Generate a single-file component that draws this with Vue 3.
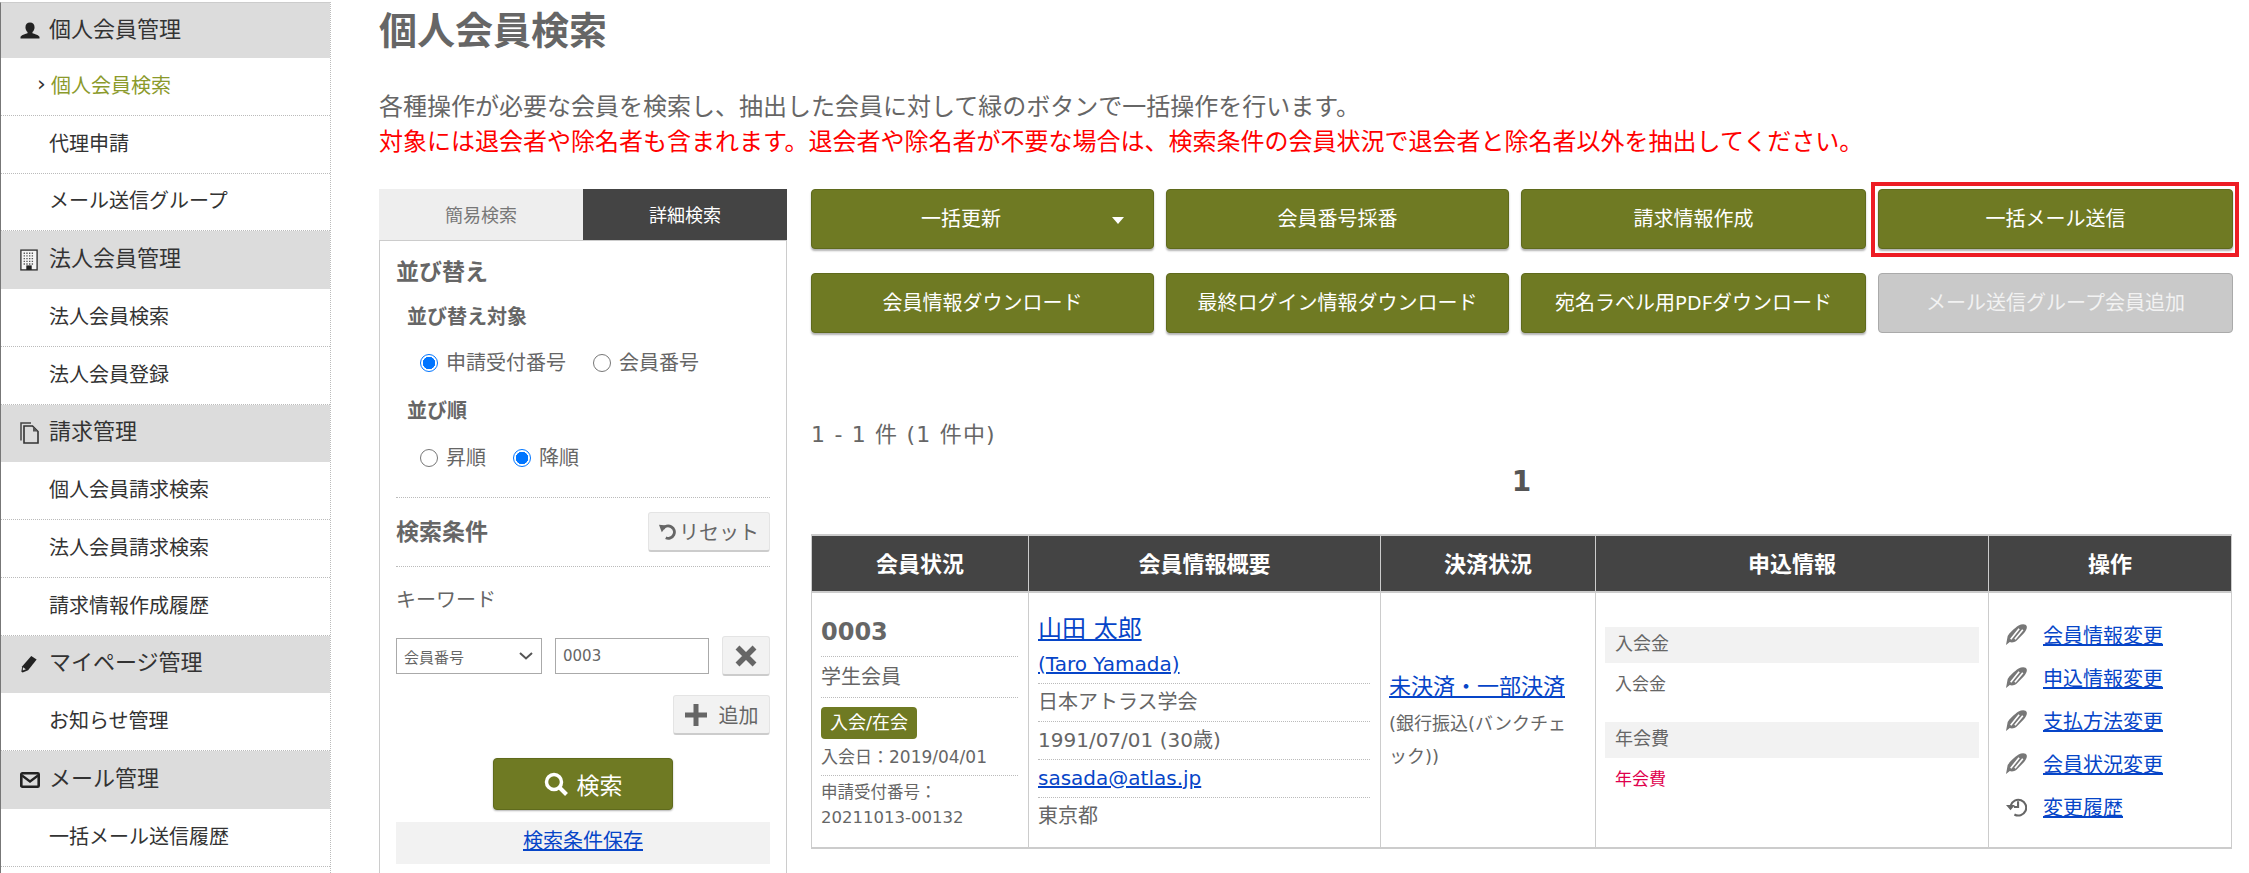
<script setup>
const sidebar = [
  { title: '個人会員管理', icon: 'user', items: [{ t: '個人会員検索', active: true }, { t: '代理申請' }, { t: 'メール送信グループ' }] },
  { title: '法人会員管理', icon: 'building', items: [{ t: '法人会員検索' }, { t: '法人会員登録' }] },
  { title: '請求管理', icon: 'file', items: [{ t: '個人会員請求検索' }, { t: '法人会員請求検索' }, { t: '請求情報作成履歴' }] },
  { title: 'マイページ管理', icon: 'pencil', items: [{ t: 'お知らせ管理' }] },
  { title: 'メール管理', icon: 'mail', items: [{ t: '一括メール送信履歴' }] }
]
const actions = [
  { t: '一括更新', caret: true }, { t: '会員番号採番' }, { t: '請求情報作成' }, { t: '一括メール送信', marked: true },
  { t: '会員情報ダウンロード' }, { t: '最終ログイン情報ダウンロード' }, { t: '宛名ラベル用PDFダウンロード' }, { t: 'メール送信グループ会員追加', off: true }
]
const ops = ['会員情報変更', '申込情報変更', '支払方法変更', '会員状況変更']
</script>

<template>
  <div class="page">
    <aside class="side">
      <template v-for="g in sidebar" :key="g.title">
        <div class="side-head">
          <span class="side-ico">
            <svg v-if="g.icon === 'user'" viewBox="0 0 20 20" width="20" height="19"><path fill="#222" d="M10 1.500c3 0 4.800 2 4.800 5 0 2.200-1 4-2.200 5v1.300c2 .8 5.500 1.200 7.400 3.700v2H0v-2c1.900-2.500 5.400-2.900 7.400-3.700v-1.300C6.200 10.500 5.200 8.700 5.200 6.500c0-3 1.800-5 4.800-5z"/></svg>
            <svg v-else-if="g.icon === 'building'" viewBox="0 0 20 24" width="18" height="22"><rect x="1" y="1" width="18" height="22" fill="#f4f4f4" stroke="#333" stroke-width="1.500"/><path stroke="#555" stroke-width="1.500" stroke-dasharray="1.500 1.500" d="M4 4.500h12M4 7.500h12M4 10.500h12M4 13.500h12M4 16.500h12"/><rect x="7" y="18" width="6" height="5" fill="#222"/></svg>
            <svg v-else-if="g.icon === 'file'" viewBox="0 0 20 22" width="20" height="22"><path fill="none" stroke="#444" stroke-width="1.500" d="M1 18.500V1h10"/><path fill="none" stroke="#333" stroke-width="1.600" d="M4 21V4h8.500L18 9.500V21z"/><path fill="#555" d="M13 4.500v5h5z"/></svg>
            <svg v-else-if="g.icon === 'pencil'" viewBox="0 0 20 20" width="18" height="20"><path fill="#222" d="M12.500 1l6 4L9 17l-6 2.500L1.500 18.500l1-6z"/><path fill="#ddd" d="M3.300 13.500l3.200 2.300-3.500 1.500z"/></svg>
            <svg v-else viewBox="0 0 20 16" width="20" height="16"><rect x="1.300" y="1.300" width="17.400" height="13.400" rx="1" fill="none" stroke="#222" stroke-width="2.600"/><path fill="none" stroke="#222" stroke-width="2.200" d="M2 3.500l8 6 8-6"/></svg>
          </span>
          <span>{{ g.title }}</span>
        </div>
        <div v-for="i in g.items" :key="i.t" class="side-item" :class="{ active: i.active }">
          <span v-if="i.active" class="chev">›</span>{{ i.t }}
        </div>
      </template>
    </aside>

    <main class="main">
      <h1 class="title">個人会員検索</h1>
      <p class="desc">各種操作が必要な会員を検索し、抽出した会員に対して緑のボタンで一括操作を行います。<br><span class="red">対象には退会者や除名者も含まれます。退会者や除名者が不要な場合は、検索条件の会員状況で退会者と除名者以外を抽出してください。</span></p>

      <div class="cols">
        <section class="search">
          <div class="tabs"><div class="tab">簡易検索</div><div class="tab on">詳細検索</div></div>
          <div class="panel">
            <h3 class="h3 first">並び替え</h3>
            <h4 class="h4">並び替え対象</h4>
            <div class="radios">
              <label class="radio"><i class="dot on"></i>申請受付番号</label>
              <label class="radio"><i class="dot"></i>会員番号</label>
            </div>
            <h4 class="h4 second">並び順</h4>
            <div class="radios last">
              <label class="radio"><i class="dot"></i>昇順</label>
              <label class="radio"><i class="dot on"></i>降順</label>
            </div>
            <div class="cond-head">
              <h3 class="h3">検索条件</h3>
              <button class="soft reset">
                <svg viewBox="0 0 16 16" width="18" height="18"><path fill="none" stroke="#666" stroke-width="2.600" d="M3.500 6A5.500 5.500 0 1 1 6 14"/><path fill="#666" d="M0 2.500l7 .5-4.500 6z"/></svg>
                リセット
              </button>
            </div>
            <div class="kw-label">キーワード</div>
            <div class="kw-row">
              <div class="select">会員番号
                <svg viewBox="0 0 14 8" width="14" height="8"><path fill="none" stroke="#555" stroke-width="2" d="M1 1l6 5.500L13 1"/></svg>
              </div>
              <div class="input">0003</div>
              <button class="soft x">
                <svg viewBox="0 0 22 22" width="22" height="22"><path fill="none" stroke="#666" stroke-width="5.500" d="M2.500 2.500l17 17M19.500 2.500l-17 17"/></svg>
              </button>
            </div>
            <div class="add-row">
              <button class="soft add">
                <svg viewBox="0 0 22 22" width="22" height="22"><path fill="#666" d="M8.500 0h5v8.500H22v5h-8.500V22h-5v-8.500H0v-5h8.500z"/></svg>
                追加
              </button>
            </div>
            <div class="go-row">
              <button class="go">
                <svg viewBox="0 0 24 24" width="24" height="24"><circle cx="10" cy="10" r="7.500" fill="none" stroke="#fff" stroke-width="3.500"/><path stroke="#fff" stroke-width="4" d="M15.500 15.500l7 7"/></svg>
                検索
              </button>
            </div>
            <div class="save"><a href="#" class="lnk">検索条件保存</a></div>
          </div>
        </section>

        <section class="results">
          <div class="actions">
            <button v-for="a in actions" :key="a.t" class="act" :class="{ off: a.off, marked: a.marked, drop: a.caret }">
              <span>{{ a.t }}</span>
              <i v-if="a.caret" class="caret"></i>
            </button>
          </div>
          <div class="count">1 - 1 件 (1 件中)</div>
          <div class="pager">1</div>

          <table class="tbl">
            <colgroup><col class="w1"><col class="w2"><col class="w3"><col class="w4"><col class="w5"></colgroup>
            <thead>
              <tr><th>会員状況</th><th>会員情報概要</th><th>決済状況</th><th>申込情報</th><th>操作</th></tr>
            </thead>
            <tbody>
              <tr>
                <td class="c1">
                  <div class="b-num">0003</div>
                  <div class="b-type">学生会員</div>
                  <div class="b-state">
                    <span class="badge">入会/在会</span>
                    <div class="small">入会日：2019/04/01</div>
                  </div>
                  <div class="small rcpt">申請受付番号：<br>20211013-00132</div>
                </td>
                <td class="c2">
                  <div class="who"><a href="#" class="lnk name">山田 太郎</a><br><a href="#" class="lnk">(Taro Yamada)</a></div>
                  <div class="line">日本アトラス学会</div>
                  <div class="line">1991/07/01 (30歳)</div>
                  <div class="line"><a href="#" class="lnk">sasada@atlas.jp</a></div>
                  <div class="line nb">東京都</div>
                </td>
                <td class="c3">
                  <a href="#" class="lnk big">未決済・一部決済</a>
                  <div class="small pay">(銀行振込(バンクチェ<br>ック))</div>
                </td>
                <td class="c4">
                  <div class="fee-h">入会金</div>
                  <div class="fee">入会金</div>
                  <div class="fee-h">年会費</div>
                  <div class="fee due">年会費</div>
                </td>
                <td class="c5">
                  <div v-for="o in ops" :key="o" class="op">
                    <svg viewBox="0 0 20 20" width="21" height="21"><path fill="#777" d="M0 20l1.600-8.500C3 9 8 4 12 1.500c3-1.800 7.200-1.800 7.800.8.400 2-1 4.500-3 6.700L10 16c-2 1.600-4.600 2-6.400 1.200z"/><path fill="none" stroke="#fff" stroke-width="1.600" d="M4.500 14.500L12.500 4.500M8.500 14.500L16 5.500"/></svg>
                    <a href="#" class="lnk">{{ o }}</a>
                  </div>
                  <div class="op">
                    <svg viewBox="0 0 20 20" width="21" height="21"><path fill="none" stroke="#666" stroke-width="2" d="M4.500 9A7.500 7.500 0 1 1 8 17.600"/><path fill="#666" d="M0 8.500h8.500L4.300 13.500zM10.500 5h2v6.500H7.500v-2h3z"/></svg>
                    <a href="#" class="lnk">変更履歴</a>
                  </div>
                </td>
              </tr>
            </tbody>
          </table>
        </section>
      </div>
    </main>
  </div>
</template>

<style>
html, body { margin: 0; background: #fff; overflow: hidden; }
</style>

<style scoped>
.page {
  display: flex;
  width: 2249px;
  height: 873px;
  overflow: hidden;
  font-family: "DejaVu Sans", "Noto Sans CJK JP", sans-serif;
  color: #666;
  background: #fff;
}
.side {
  width: 329px;
  flex: none;
  margin-top: 2px;
  border-left: 1px solid #777;
  border-right: 1px dotted #bbb;
  border-top: 1px solid #ccc;
  color: #333;
  font-size: 20px;
}
.side-head {
  height: 57.75px;
  background: #dcdcdc;
  display: flex;
  align-items: center;
  font-size: 22px;
  padding-left: 19px;
  padding-bottom: 8px;
  box-sizing: border-box;
}
.side-head:first-child { height: 55px; }
.side-ico { width: 29px; display: flex; align-items: center; flex: none; margin-top: 8px; }
.side-item {
  position: relative;
  height: 57.75px;
  box-sizing: border-box;
  padding-left: 48px;
  padding-bottom: 4px;
  display: flex;
  align-items: center;
  border-bottom: 1px dotted #bbb;
}
.side-item.active { color: #8b9a2b; padding-left: 50px; }
.chev { position: absolute; left: 36px; color: #333; font-size: 22px; line-height: 1; }

.main { flex: 1; padding-left: 48px; min-width: 0; }
.title { margin: 7px 0 0; font-size: 38px; line-height: 48px; font-weight: 700; color: #666; }
.desc { margin: 35px 0 0; font-size: 24px; line-height: 34.5px; color: #666; height: 69px; }
.red { color: #f00; }

.cols { display: flex; margin-top: 30px; }
.search { width: 408px; flex: none; }
.tabs { display: flex; height: 51px; }
.tab { flex: 1; display: flex; align-items: center; justify-content: center; background: #eee; font-size: 18px; color: #777; padding-bottom: 2px; box-sizing: border-box; }
.tab.on { background: #444; color: #fff; }
.panel { border: 1px solid #ccc; padding: 14px 16px 40px; height: 640px; box-sizing: border-box; }
.h3 { margin: 0; font-size: 23px; line-height: 34px; font-weight: 700; color: #666; }
.h4 { margin: 13px 0 0 11px; font-size: 20px; line-height: 30px; font-weight: 700; color: #666; }
.h4.second { margin-top: 18px; }
.radios { display: flex; gap: 27px; margin: 16px 0 0 24px; height: 30px; }
.radios.last { padding-bottom: 25px; margin-top: 17px; height: 29px; }
.radio { display: flex; align-items: center; font-size: 20px; line-height: 30px; color: #666; }
.dot { width: 18px; height: 18px; border-radius: 50%; border: 1.5px solid #777; box-sizing: border-box; margin-right: 8px; flex: none; background: #fff; }
.dot.on { border: 1.5px solid #0075ff; background: radial-gradient(circle, #0075ff 0 6px, #fff 6.500px); }
.cond-head { border-top: 1px dotted #bbb; border-bottom: 1px dotted #bbb; display: flex; justify-content: space-between; align-items: center; height: 70px; box-sizing: border-box; padding-bottom: 1px; }
.soft { background: #f2f2f2; border: 1px solid #e4e4e4; border-bottom: 2px solid #ccc; border-radius: 3px; color: #666; font: inherit; font-size: 20px; display: flex; align-items: center; justify-content: center; padding: 0; box-sizing: border-box; }
.reset { width: 122px; height: 40px; gap: 2px; }
.kw-label { margin-top: 18px; font-size: 20px; line-height: 30px; }
.kw-row { display: flex; align-items: center; margin-top: 21px; height: 40px; }
.select, .input { height: 36px; box-sizing: border-box; border: 1px solid #aaa; font-size: 15px; color: #666; display: flex; align-items: center; padding-left: 7px; background: #fff; }
.select { width: 146px; justify-content: space-between; padding-right: 8px; }
.input { width: 154px; margin-left: 13px; }
.x { width: 48px; height: 40px; margin-left: 13px; }
.add-row { display: flex; justify-content: flex-end; margin-top: 19px; }
.add { width: 97px; height: 40px; gap: 12px; }
.go-row { display: flex; justify-content: center; margin-top: 23px; }
.go { width: 180px; height: 52px; background: #6f7a23; border: 1px solid #5f6a1c; border-radius: 4px; box-shadow: 0 1px 2px rgba(0, 0, 0, .3); color: #fff; font: inherit; font-size: 23px; display: flex; align-items: center; justify-content: center; gap: 9px; padding: 0; }
.save { margin-top: 12px; height: 42px; background: #f2f2f2; text-align: center; font-size: 20px; line-height: 38px; }
.lnk { color: #0645c8; text-decoration: underline; }

.results { margin-left: 24px; width: 1421px; }
.actions { display: grid; grid-template-columns: 343px 343px 345px 355px; column-gap: 12px; row-gap: 24px; }
.act { position: relative; height: 60px; background: #6f7a23; border: 1px solid #5f6a1c; border-radius: 4px; box-shadow: 0 2px 2px rgba(0, 0, 0, .3); color: #fff; font-family: "Noto Sans", "Noto Sans CJK JP", sans-serif; font-size: 20px; padding: 0 0 4px; display: flex; align-items: center; justify-content: center; }
.act.drop { padding-right: 43px; }
.act.off { background: #c9c9c9; border-color: #aaa; box-shadow: none; color: #f2f2f2; }
.act.marked::after { content: ""; position: absolute; inset: -8px -7px -9px -8px; border: 4px solid #ed1c24; pointer-events: none; }
.caret { position: absolute; left: 300px; top: 27px; width: 0; height: 0; border-left: 6px solid transparent; border-right: 6px solid transparent; border-top: 7px solid #fff; }
.count { margin-top: 84px; font-size: 22px; line-height: 36px; color: #666; letter-spacing: 1.2px; }
.pager { margin-top: 9px; text-align: center; font-size: 28px; line-height: 40px; font-weight: 700; color: #555; width: 1421px; }

.tbl { margin-top: 32px; width: 1420px; table-layout: fixed; border-collapse: collapse; border-top: 2px solid #ccc; border-bottom: 2px solid #ccc; border-right: 1px solid #ccc; border-left: 1px solid #ccc; }
.w1 { width: 217px; }
.w2 { width: 352px; }
.w3 { width: 215px; }
.w4 { width: 393px; }
.w5 { width: 243px; }
.tbl th { height: 57px; padding: 0 0 3px; background: #444; color: #fff; font-size: 22px; font-weight: 700; border-left: 1px solid #ccc; border-bottom: 2px solid #ccc; box-sizing: border-box; }
.tbl td { height: 256px; padding: 0; border-left: 1px solid #ccc; vertical-align: top; font-size: 20px; color: #666; box-sizing: border-box; }
.c1 { padding: 17px 10px 0 9px !important; }
.b-num { font-size: 24px; line-height: 44px; font-weight: 700; padding-bottom: 2px; border-bottom: 1px dotted #bbb; }
.b-type { line-height: 40px; border-bottom: 1px dotted #bbb; }
.b-state { padding-top: 9px; border-bottom: 1px dotted #bbb; }
.badge { display: inline-block; background: #6f7a23; color: #fff; font-size: 18px; line-height: 31px; height: 32px; padding: 0 9px; border-radius: 4px; vertical-align: top; }
.small { font-size: 17px; line-height: 37px; }
.rcpt { font-size: 16.5px; line-height: 25px; padding-top: 4px; }
.b-state .small { line-height: 36px; }
.c2 { padding: 19px 10px 0 9px !important; }
.who { line-height: 34px; padding-bottom: 2px; border-bottom: 1px dotted #bbb; }
.name { font-size: 24px; }
.big { font-size: 22px; }
.line { line-height: 37px; border-bottom: 1px dotted #bbb; }
.line.nb { border-bottom: 0; }
.c3 { padding: 0 8px !important; vertical-align: middle !important; }
.pay { font-size: 18px; line-height: 33px; margin-top: 7px; white-space: nowrap; }
.c4 { padding: 34px 9px 0 9px !important; font-size: 18px !important; }
.fee-h { height: 36px; line-height: 34px; background: #f2f2f2; padding-left: 10px; }
.fee { height: 59px; line-height: 42px; padding-left: 10px; box-sizing: border-box; font-size: 17px; }
.due { color: #e0004d; }
.c5 { padding: 20px 0 0 17px !important; }
.op { height: 43px; display: flex; align-items: center; gap: 16px; }
</style>
